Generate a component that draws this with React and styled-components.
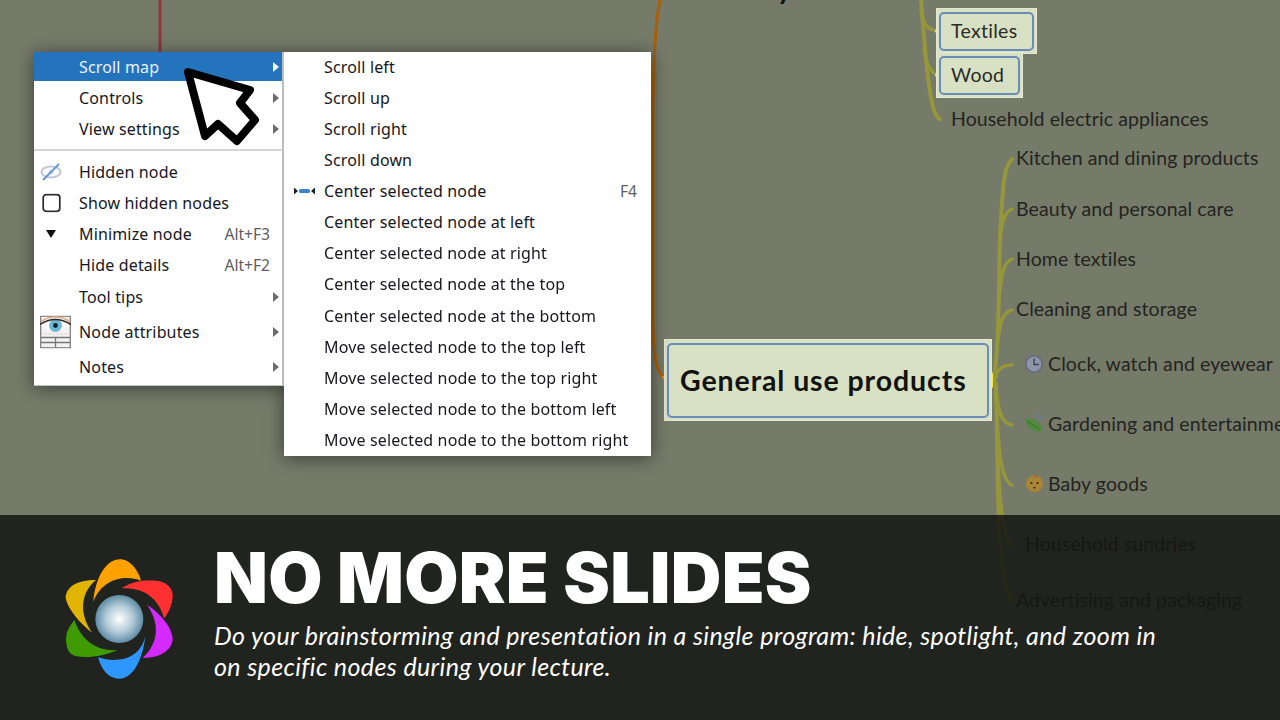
import React from "react";
import styled, { createGlobalStyle } from "styled-components";

const GlobalStyle = createGlobalStyle`
  html, body { margin: 0; padding: 0; background: #757a69; }
`;

const MAIN_ITEMS_TOP = [
  { label: "Scroll map", h: 29, active: true },
  { label: "Controls", h: 33 },
  { label: "View settings", h: 30 },
];

const SUB_ITEMS = [
  { label: "Scroll left", h: 29 },
  { label: "Scroll up", h: 33.5 },
  { label: "Scroll right", h: 29.5 },
  { label: "Scroll down" },
  { label: "Center selected node", center: true },
  { label: "Center selected node at left" },
  { label: "Center selected node at right" },
  { label: "Center selected node at the top" },
  { label: "Center selected node at the bottom" },
  { label: "Move selected node to the top left" },
  { label: "Move selected node to the top right" },
  { label: "Move selected node to the bottom left" },
  { label: "Move selected node to the bottom right" },
];

const BRANCHES = [
  { text: "Household electric appliances", x: 951, y: 119 },
  { text: "Kitchen and dining products", x: 1016, y: 158 },
  { text: "Beauty and personal care", x: 1016, y: 209 },
  { text: "Home textiles", x: 1016, y: 259 },
  { text: "Cleaning and storage", x: 1016, y: 309 },
  { text: "Clock, watch and eyewear", x: 1048, y: 364 },
  { text: "Gardening and entertainment", x: 1048, y: 424 },
  { text: "Baby goods", x: 1048, y: 484 },
  { text: "Household sundries", x: 1025, y: 544 },
  { text: "Advertising and packaging", x: 1016, y: 600 },
];

const Page = styled.div`
  position: relative;
  width: 1280px;
  height: 720px;
  overflow: hidden;
  background: #757a69;
`;

const Lines = styled.svg`
  position: absolute;
  inset: 0;
`;

const BranchText = styled.div`
  position: absolute;
  left: ${(p) => p.$x}px;
  top: ${(p) => p.$y}px;
  transform: translateY(-50%);
  font-family: "Lato", sans-serif;
  font-size: 19.5px;
  letter-spacing: 0.1px;
  line-height: 24px;
  color: #24241f;
  white-space: nowrap;
`;

const TopFragment = styled.div`
  position: absolute;
  left: 777px;
  top: -26px;
  font-family: "Lato", sans-serif;
  font-weight: 700;
  font-size: 28px;
  line-height: 28px;
  color: #111;
`;

const NodeHalo = styled.div`
  position: absolute;
  left: ${(p) => p.$x}px;
  top: ${(p) => p.$y}px;
  padding: 4px 3px 3px;
  background: #d8e1c4;
  box-shadow: inset 0 0 0 1px #e4ead4;
`;

const NodeBox = styled.div`
  box-sizing: border-box;
  display: flex;
  align-items: center;
  width: ${(p) => p.$w}px;
  height: ${(p) => p.$h}px;
  padding: 0 0 2px ${(p) => (p.$big ? 11 : 10)}px;
  border: 2px solid #6c8cb8;
  border-radius: 5px;
  background: #d8e1c4;
  font-family: "Lato", sans-serif;
  font-size: ${(p) => (p.$big ? 28.5 : 19.5)}px;
  font-weight: ${(p) => (p.$big ? 700 : 400)};
  letter-spacing: ${(p) => (p.$big ? 0.9 : 0.3)}px;
  color: ${(p) => (p.$big ? "#12120f" : "#2a2a26")};
  white-space: nowrap;
`;

const Glyph = styled.svg`
  position: absolute;
  left: ${(p) => p.$x}px;
  top: ${(p) => p.$y}px;
`;

const MenuGroup = styled.div`
  position: absolute;
  left: 34px;
  top: 52px;
  display: flex;
  align-items: flex-start;
  font-family: "Noto Sans", "Open Sans", sans-serif;
  font-size: 16px;
  letter-spacing: 0.15px;
  color: #16161e;
  filter: drop-shadow(0 2px 9px rgba(0, 0, 0, 0.5));
`;

const MenuPanel = styled.div`
  box-sizing: border-box;
  width: ${(p) => p.$w}px;
  background: #fff;
  padding-bottom: ${(p) => (p.$main ? 2 : 0)}px;
  border-right: ${(p) => (p.$main ? "2px solid #bdbdbd" : "none")};
  border-bottom: ${(p) => (p.$main ? "1px solid #c4c4c4" : "none")};
`;

const Row = styled.div`
  position: relative;
  display: flex;
  align-items: center;
  box-sizing: border-box;
  height: ${(p) => p.$h}px;
  padding: 0 ${(p) => p.$right}px 0 ${(p) => p.$pad}px;
  background: ${(p) => (p.$active ? "#2473bd" : "transparent")};
  color: ${(p) => (p.$active ? "#eaf2fa" : "inherit")};
  white-space: nowrap;
`;

const Label = styled.span`
  flex: 1;
`;

const Shortcut = styled.span`
  color: #5d5d5d;
  font-size: 15.6px;
  letter-spacing: 0;
`;

const Arrow = styled.span`
  position: absolute;
  right: 3px;
  top: 50%;
  transform: translateY(-50%);
  border-left: 6px solid ${(p) => (p.$active ? "#f4f8fc" : "#6c6c6c")};
  border-top: 5.5px solid transparent;
  border-bottom: 5.5px solid transparent;
`;

const Separator = styled.div`
  height: 12px;
  display: flex;
  align-items: center;
  &::after {
    content: "";
    flex: 1;
    height: 2px;
    background: #d6d6d6;
  }
`;

const RowIcon = styled.svg`
  position: absolute;
  left: ${(p) => p.$x}px;
  top: 50%;
  transform: translateY(-50%);
`;

const Cursor = styled.svg`
  position: absolute;
  left: 170px;
  top: 55px;
`;

const Banner = styled.div`
  position: absolute;
  left: 0;
  right: 0;
  bottom: 0;
  height: 205px;
  display: flex;
  box-sizing: border-box;
  padding: 15px 0 0 40px;
  gap: 14px;
  background: rgba(20, 21, 18, 0.86);
`;

const Logo = styled.svg`
  flex: none;
`;

const BannerText = styled.div`
  display: flex;
  flex-direction: column;
  padding-top: 15px;
`;

const Title = styled.h1`
  margin: 0;
  font-family: "Inter", sans-serif;
  font-size: 70px;
  font-weight: 900;
  line-height: 66px;
  letter-spacing: 0.3px;
  color: #fff;
  white-space: nowrap;
`;

const Subtitle = styled.p`
  margin: 9px 0 0;
  width: 960px;
  font-family: "Lato", sans-serif;
  font-style: italic;
  font-size: 25px;
  line-height: 31px;
  letter-spacing: 0.38px;
  color: #fff;
`;

const HiddenIcon = () => (
  <RowIcon $x={6} width="22" height="20" viewBox="0 0 22 20">
    <ellipse cx="11" cy="10" rx="9.5" ry="5.5" fill="none" stroke="#c3c9d2" strokeWidth="2" />
    <circle cx="11" cy="10" r="2.5" fill="#d5d9df" />
    <line x1="3" y1="18" x2="19" y2="2" stroke="#5b96d8" strokeWidth="1.8" />
  </RowIcon>
);

const CheckIcon = () => (
  <RowIcon $x={8} width="19" height="19" viewBox="0 0 19 19">
    <rect x="1.2" y="1.2" width="16.6" height="16.6" rx="3" fill="#fff" stroke="#2a2a2a" strokeWidth="1.7" />
  </RowIcon>
);

const DownIcon = () => (
  <RowIcon $x={11} width="12" height="10" viewBox="0 0 12 10">
    <path d="M1 1 H11 L6 9 Z" fill="#111" />
  </RowIcon>
);

const EyeTableIcon = () => (
  <RowIcon $x={6} width="31" height="33" viewBox="0 0 31 33">
    <rect x="0.7" y="0.7" width="29.6" height="31.6" fill="#f2f2f2" stroke="#777" strokeWidth="1.2" />
    <path d="M1 22 H30 M1 27 H30 M15.5 22 V32" stroke="#777" strokeWidth="1.3" />
    <path d="M1 18 Q15 19 30 18" stroke="#eebcb4" strokeWidth="1" strokeDasharray="2 2" fill="none" />
    <path d="M1 10 Q15 1 30 10 Q15 20 1 10 Z" fill="#fff" />
    <circle cx="15.5" cy="10" r="6.5" fill="#6fb8d4" />
    <circle cx="15.5" cy="10" r="2.4" fill="#10222c" />
    <path d="M0 9 Q15 -1 31 9" stroke="#2f2a24" strokeWidth="1.5" fill="none" />
    <path d="M1 6 Q15 -3 30 6" stroke="#dfae8f" strokeWidth="1.5" fill="none" />
  </RowIcon>
);

const CenterIcon = () => (
  <RowIcon $x={10} width="22" height="8" viewBox="0 0 22 8">
    <path d="M0 0.5 L4 4 L0 7.5 Z M21 0.5 L17 4 L21 7.5 Z" fill="#17202a" />
    <rect x="5" y="2" width="11" height="4" rx="1.5" fill="#3a86cc" />
  </RowIcon>
);

const LogoMark = () => (
  <Logo width="160" height="170" viewBox="0 0 480 510">
    <defs>
      <radialGradient id="orb" cx="50%" cy="50%" r="50%">
        <stop offset="0%" stopColor="#ffffff" />
        <stop offset="55%" stopColor="#b4ccd9" />
        <stop offset="100%" stopColor="#5f8ca6" />
      </radialGradient>
    </defs>
    <path d="M160 215 C165 150 195 88 240 88 C270 88 295 120 303 152 C260 135 190 140 160 215Z" fill="#ffa200" />
    <path d="M245 175 C280 150 320 150 350 152 C375 155 400 170 398 200 C397 225 385 250 372 265 C360 215 320 170 245 175Z" fill="#ff3030" />
    <path d="M322 225 C360 250 395 290 398 325 C398 360 360 385 308 384 C350 345 365 290 322 225Z" fill="#d42aff" />
    <path d="M316 318 C310 375 285 446 238 446 C205 446 185 420 174 382 C230 400 300 390 316 318Z" fill="#2e96ff" />
    <path d="M232 360 C190 380 140 385 105 378 C80 370 75 340 80 310 C85 295 95 280 103 270 C120 320 160 365 232 360Z" fill="#3e9c00" />
    <path d="M156 308 C120 280 85 240 77 205 C78 170 110 150 168 150 C130 180 110 240 156 308Z" fill="#e0b400" />
    <circle cx="238" cy="267" r="72" fill="url(#orb)" />
  </Logo>
);

const App = () => {
  return (
    <Page>
      <GlobalStyle />

      <Lines width="1280" height="720" viewBox="0 0 1280 720" fill="none">
        <path d="M160 0 V56" stroke="#8c3a40" strokeWidth="3" />
        <path d="M660 0 C655 25 653 60 653 120 V320 C653 355 656 375 667 380" stroke="#a85f08" strokeWidth="3" />
        <path d="M663 376 Q665 380 668 380" stroke="#f08c10" strokeWidth="3" />
        <g stroke="#96963a" strokeLinecap="round">
          <path d="M921 0 C923 20 925 60 929 85 C932 105 934 116 940 119" strokeWidth="4" />
          <path d="M921 10 C923 24 927 30 938 31" strokeWidth="3.5" />
          <path d="M924 50 C927 66 932 74 938 75" strokeWidth="3.5" />
          <path d="M994 380 C1001 330 998 250 1001 220 C1003 185 1004 166 1012 159" strokeWidth="4" />
          <path d="M1000 240 C1002 220 1005 212 1012 209" strokeWidth="3.5" />
          <path d="M1000 290 C1002 270 1005 262 1012 259" strokeWidth="3.5" />
          <path d="M998 340 C1000 320 1004 312 1012 310" strokeWidth="3.5" />
          <path d="M996 378 C996 370 1002 365 1012 365" strokeWidth="3.5" />
          <path d="M995 382 C998 405 999 423 1012 425" strokeWidth="3.5" />
          <path d="M995 384 C998 430 998 480 1012 485" strokeWidth="3.5" />
          <path d="M996 384 C998 450 997 530 1012 546" strokeWidth="3.5" />
          <path d="M996 384 C998 470 995 570 1012 602" strokeWidth="3.5" />
        </g>
        <g fill="#f2ee4a">
          <circle cx="937" cy="31" r="2" />
          <circle cx="937" cy="75" r="2" />
          <rect x="990" y="372" width="3" height="16" rx="1.5" />
        </g>
      </Lines>

      <TopFragment>y</TopFragment>

      <NodeHalo $x={936} $y={8}>
        <NodeBox $w={95} $h={39}>Textiles</NodeBox>
      </NodeHalo>
      <NodeHalo $x={936} $y={52}>
        <NodeBox $w={81} $h={39}>Wood</NodeBox>
      </NodeHalo>
      <NodeHalo $x={664} $y={339}>
        <NodeBox $big $w={322} $h={75}>General use products</NodeBox>
      </NodeHalo>

      {BRANCHES.map((b) => (
        <BranchText key={b.text} $x={b.x} $y={b.y}>{b.text}</BranchText>
      ))}

      <Glyph $x={1024} $y={354} width="20" height="20" viewBox="0 0 20 20">
        <circle cx="10" cy="10" r="8.2" fill="#8e95a8" stroke="#626a80" strokeWidth="1.6" />
        <path d="M10 4.5 V10.5 H15" stroke="#39404f" strokeWidth="1.4" fill="none" />
      </Glyph>
      <Glyph $x={1024} $y={413} width="20" height="22" viewBox="0 0 20 22">
        <path d="M1 6 C8 4 15 8 19 17 C12 21 3 17 1 6Z" fill="#4f8a3f" />
        <path d="M3 8 L16 17" stroke="#3f6e33" strokeWidth="1" />
        <path d="M12 6 L16 1 M15 8 L19 3" stroke="#5a86ad" strokeWidth="1.2" />
      </Glyph>
      <Glyph $x={1025} $y={473} width="19" height="20" viewBox="0 0 19 20">
        <circle cx="9.5" cy="11" r="8.5" fill="#a88638" />
        <path d="M9.5 3 C13 1 12 5 9.5 4.5" stroke="#a8602c" strokeWidth="1.1" fill="none" />
        <circle cx="6.5" cy="10" r="1.1" fill="#2c2410" />
        <circle cx="12.5" cy="10" r="1.1" fill="#2c2410" />
        <path d="M8 14 H11 L9.5 16 Z" fill="#4a2a10" />
      </Glyph>

      <MenuGroup>
        <MenuPanel $main $w={250}>
          {MAIN_ITEMS_TOP.map((item) => (
            <Row key={item.label} $h={item.h} $pad={45} $right={12} $active={item.active}>
              <Label>{item.label}</Label>
              <Arrow $active={item.active} />
            </Row>
          ))}
          <Separator />
          <Row $h={31.5} $pad={45} $right={12}><HiddenIcon /><Label>Hidden node</Label></Row>
          <Row $h={31} $pad={45} $right={12}><CheckIcon /><Label>Show hidden nodes</Label></Row>
          <Row $h={31} $pad={45} $right={12}><DownIcon /><Label>Minimize node</Label><Shortcut>Alt+F3</Shortcut></Row>
          <Row $h={31} $pad={45} $right={12}><Label>Hide details</Label><Shortcut>Alt+F2</Shortcut></Row>
          <Row $h={32.5} $pad={45} $right={12}><Label>Tool tips</Label><Arrow /></Row>
          <Row $h={38} $pad={45} $right={12}><EyeTableIcon /><Label>Node attributes</Label><Arrow /></Row>
          <Row $h={32} $pad={45} $right={12}><Label>Notes</Label><Arrow /></Row>
        </MenuPanel>
        <MenuPanel $w={367}>
          {SUB_ITEMS.map((item) => (
            <Row key={item.label} $h={item.h || 31.2} $pad={40} $right={14}>
              {item.center && <CenterIcon />}
              <Label>{item.label}</Label>
              {item.center && <Shortcut>F4</Shortcut>}
            </Row>
          ))}
        </MenuPanel>
      </MenuGroup>

      <Cursor width="100" height="100" viewBox="170 55 100 100">
        <path
          d="M188 72 L250 90 L240 103 L255 120 L237 141 L218 124 L205 136 Z"
          fill="#fff"
          stroke="#000"
          strokeWidth="8"
          strokeLinejoin="round"
        />
      </Cursor>

      <Banner>
        <LogoMark />
        <BannerText>
          <Title>NO MORE SLIDES</Title>
          <Subtitle>
            Do your brainstorming and presentation in a single program: hide, spotlight, and zoom in
            on specific nodes during your lecture.
          </Subtitle>
        </BannerText>
      </Banner>
    </Page>
  );
};

export default App;
